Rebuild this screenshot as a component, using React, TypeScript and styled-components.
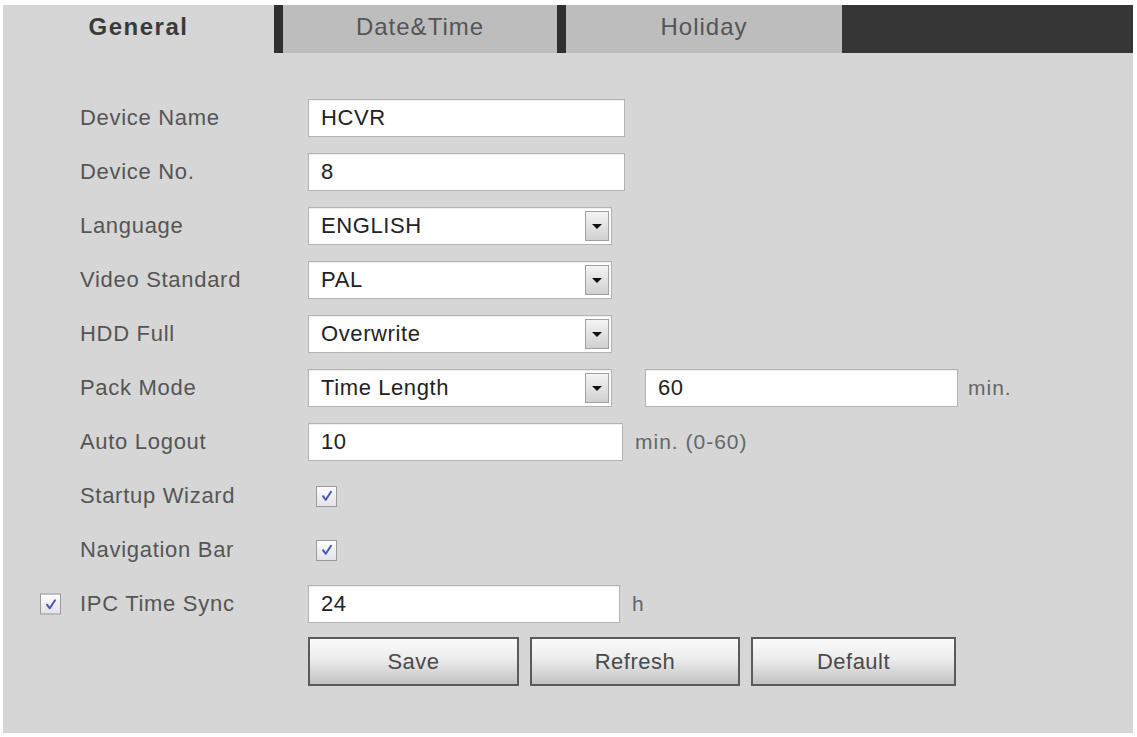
import React, { useState } from "react";
import styled, { createGlobalStyle } from "styled-components";

const GlobalStyle = createGlobalStyle`
  html, body {
    margin: 0;
    padding: 0;
    background: #ffffff;
  }
  body {
    font-family: "Liberation Sans", Arial, sans-serif;
  }
`;

// ============== STYLED COMPONENTS ==============

const Page = styled.div`
  width: 1137px;
  height: 737px;
  padding: 5px 4px 4px 3px;
  box-sizing: border-box;
  display: flex;
  flex-direction: column;
`;

const Panel = styled.div`
  flex: 1;
  background: #d6d6d6;
  display: flex;
  flex-direction: column;
`;

const TabBar = styled.div`
  display: flex;
  height: 48px;
  background: #363636;
`;

const Tab = styled.div<{ $active?: boolean; $width: number }>`
  width: ${(p) => p.$width}px;
  display: flex;
  align-items: center;
  justify-content: center;
  font-size: 24px;
  letter-spacing: ${(p) => (p.$active ? "1.5px" : "1px")};
  font-weight: ${(p) => (p.$active ? 700 : 400)};
  color: ${(p) => (p.$active ? "#3a3a3a" : "#555")};
  background: ${(p) => (p.$active ? "#d6d6d6" : "#bdbdbd")};
  padding-bottom: 4px;
  box-sizing: border-box;
`;

const TabDivider = styled.div`
  width: 9px;
  background: #303030;
`;

const Form = styled.div`
  padding: 38px 0 0 77px;
  display: flex;
  flex-direction: column;
`;

const Row = styled.div`
  display: grid;
  grid-template-columns: 228px auto;
  align-items: center;
  height: 54px;
`;

const LabelCell = styled.div`
  position: relative;
  font-size: 22px;
  letter-spacing: 0.7px;
  color: #555;
`;

const LeadCheck = styled.span`
  position: absolute;
  left: -40px;
  top: 50%;
  transform: translateY(-50%);
  display: flex;
`;

const Controls = styled.div<{ $gap?: number }>`
  display: flex;
  align-items: center;
  gap: ${(p) => p.$gap ?? 12}px;
`;

const TextBox = styled.div<{ $width: number }>`
  width: ${(p) => p.$width}px;
  height: 38px;
  box-sizing: border-box;
  background: #fff;
  border: 1px solid #b3b3b3;
  box-shadow: inset 0 1px 1px rgba(0, 0, 0, 0.07);
  display: flex;
  align-items: center;
  padding-left: 12px;
  font-size: 22px;
  letter-spacing: 0.6px;
  color: #222;
`;

const SelectBox = styled(TextBox)`
  justify-content: space-between;
`;

const DropButton = styled.div`
  width: 24px;
  height: 30px;
  margin-right: 2px;
  box-sizing: border-box;
  border: 1px solid #a0a0a0;
  background: linear-gradient(#f4f4f4, #d0d0d0);
  display: flex;
  align-items: center;
  justify-content: center;

  &::after {
    content: "";
    border-left: 5px solid transparent;
    border-right: 5px solid transparent;
    border-top: 5px solid #111;
  }
`;

const Unit = styled.span`
  font-size: 21px;
  letter-spacing: 1px;
  color: #666;
`;

const CheckBox = styled.span<{ $lead?: boolean }>`
  width: 21px;
  height: 21px;
  box-sizing: border-box;
  border: 1px solid #9a9a9a;
  background: linear-gradient(#fdfdfd, #e2e2e8);
  display: inline-flex;
  align-items: center;
  justify-content: center;
  cursor: pointer;
  margin-left: ${(p) => (p.$lead ? 0 : 8)}px;
`;

const ButtonRow = styled.div`
  display: flex;
  gap: 11px;
  margin: 6px 0 0 228px;
`;

const ActionButton = styled.button<{ $width: number }>`
  width: ${(p) => p.$width}px;
  height: 49px;
  border: 2px solid #5a5a5a;
  background: linear-gradient(#fbfbfb 0%, #ececec 45%, #c2c2c2 100%);
  font-family: "Liberation Sans", Arial, sans-serif;
  font-size: 22px;
  letter-spacing: 0.5px;
  color: #4a4a4a;
  cursor: pointer;
`;

// ============== COMPONENTE ==============

const Tick = () => (
  <svg width="14" height="14" viewBox="0 0 14 14">
    <path
      d="M3 7.2 L5.8 10.8 L11 2.8"
      fill="none"
      stroke="#4456b8"
      strokeWidth="2"
      strokeLinecap="round"
      strokeLinejoin="round"
    />
  </svg>
);

const Check: React.FC<{ lead?: boolean }> = ({ lead }) => {
  const [on, setOn] = useState(true);
  return (
    <CheckBox $lead={lead} onClick={() => setOn(!on)}>
      {on && <Tick />}
    </CheckBox>
  );
};

const Select: React.FC<{ value: string }> = ({ value }) => (
  <SelectBox $width={304}>
    <span>{value}</span>
    <DropButton />
  </SelectBox>
);

export default function App() {
  return (
    <>
      <GlobalStyle />
      <Page>
        <Panel>
          <TabBar>
            <Tab $active $width={271}>General</Tab>
            <TabDivider />
            <Tab $width={274}>Date&amp;Time</Tab>
            <TabDivider />
            <Tab $width={276}>Holiday</Tab>
          </TabBar>

          <Form>
            <Row>
              <LabelCell>Device Name</LabelCell>
              <Controls>
                <TextBox $width={317}>HCVR</TextBox>
              </Controls>
            </Row>
            <Row>
              <LabelCell>Device No.</LabelCell>
              <Controls>
                <TextBox $width={317}>8</TextBox>
              </Controls>
            </Row>
            <Row>
              <LabelCell>Language</LabelCell>
              <Controls>
                <Select value="ENGLISH" />
              </Controls>
            </Row>
            <Row>
              <LabelCell>Video Standard</LabelCell>
              <Controls>
                <Select value="PAL" />
              </Controls>
            </Row>
            <Row>
              <LabelCell>HDD Full</LabelCell>
              <Controls>
                <Select value="Overwrite" />
              </Controls>
            </Row>
            <Row>
              <LabelCell>Pack Mode</LabelCell>
              <Controls $gap={33}>
                <Select value="Time Length" />
                <Controls $gap={10}>
                  <TextBox $width={313}>60</TextBox>
                  <Unit>min.</Unit>
                </Controls>
              </Controls>
            </Row>
            <Row>
              <LabelCell>Auto Logout</LabelCell>
              <Controls>
                <TextBox $width={315}>10</TextBox>
                <Unit>min. (0-60)</Unit>
              </Controls>
            </Row>
            <Row>
              <LabelCell>Startup Wizard</LabelCell>
              <Controls>
                <Check />
              </Controls>
            </Row>
            <Row>
              <LabelCell>Navigation Bar</LabelCell>
              <Controls>
                <Check />
              </Controls>
            </Row>
            <Row>
              <LabelCell>
                <LeadCheck>
                  <Check lead />
                </LeadCheck>
                IPC Time Sync
              </LabelCell>
              <Controls>
                <TextBox $width={312}>24</TextBox>
                <Unit>h</Unit>
              </Controls>
            </Row>
            <ButtonRow>
              <ActionButton $width={211}>Save</ActionButton>
              <ActionButton $width={210}>Refresh</ActionButton>
              <ActionButton $width={205}>Default</ActionButton>
            </ButtonRow>
          </Form>
        </Panel>
      </Page>
    </>
  );
}
